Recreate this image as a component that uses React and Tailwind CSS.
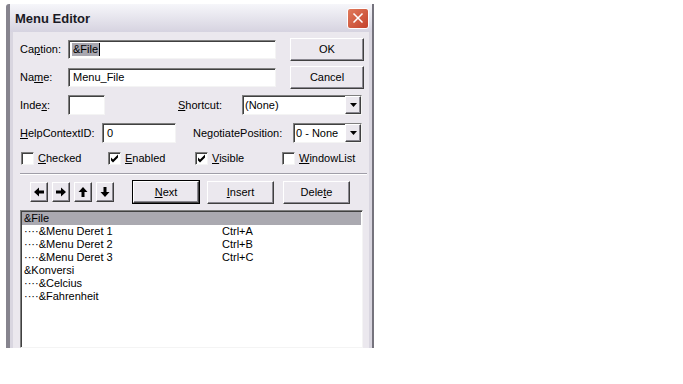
import { X } from "lucide-react";

const sunken =
  "bg-white border border-t-[#7f7f7f] border-l-[#7f7f7f] border-r-[#f4f4f4] border-b-[#f4f4f4] shadow-[inset_1px_1px_0_#404040]";
const raised =
  "bg-[#ebe8ee] border border-t-white border-l-white border-r-[#404040] border-b-[#404040] shadow-[inset_-1px_-1px_0_#8a8890] flex items-center justify-center";

function U({ children }) {
  return <span className="underline underline-offset-1">{children}</span>;
}

function Select({ value, className }) {
  return (
    <div className={`${sunken} flex items-stretch h-[20px] ${className}`}>
      <div className="flex-1 pl-[2px] flex items-center">{value}</div>
      <div className={`${raised} w-[16px]`}>
        <svg width="7" height="4" viewBox="0 0 7 4">
          <path d="M0 0h7L3.5 4z" fill="#000" />
        </svg>
      </div>
    </div>
  );
}

function Check({ checked, children, className }) {
  return (
    <div className={`flex items-center gap-[4px] ${className}`}>
      <div className={`${sunken} w-[13px] h-[13px] flex items-center justify-center`}>
        {checked && (
          <svg width="9" height="9" viewBox="0 0 9 9">
            <path d="M1 3.5l2 2L8 0.5v3L3 8.5 1 6.5z" fill="#000" />
          </svg>
        )}
      </div>
      <span>{children}</span>
    </div>
  );
}

function Arrow({ dir }) {
  const paths = {
    left: "M0 5L5 0.5v3h5v3H5v3z",
    right: "M10 5L5 0.5v3H0v3h5v3z",
    up: "M5 0L0.5 5h3v5h3V5h3z",
    down: "M5 10L0.5 5h3V0h3v5h3z",
  };
  return (
    <div className={`${raised} w-[18px] h-[20px]`}>
      <svg width="10" height="10" viewBox="0 0 10 10">
        <path d={paths[dir]} fill="#000" />
      </svg>
    </div>
  );
}

const items = [
  { t: "&File", k: "", sel: true },
  { t: "····&Menu Deret 1", k: "Ctrl+A" },
  { t: "····&Menu Deret 2", k: "Ctrl+B" },
  { t: "····&Menu Deret 3", k: "Ctrl+C" },
  { t: "&Konversi", k: "" },
  { t: "····&Celcius", k: "" },
  { t: "····&Fahrenheit", k: "" },
];

export default function App() {
  return (
    <div className="w-[683px] h-[384px] bg-white overflow-hidden font-['Liberation_Sans',Arial,sans-serif] text-[11px] leading-[13px] text-black">
      <div className="ml-[6px] mt-[4px] w-[368px] h-[344px] flex flex-col bg-[#d9d6e0] border-l-[4px] border-l-[#86848e] border-r-[2px] border-r-[#75737d] rounded-tl-[3px]">
        {/* title bar */}
        <div className="h-[28px] flex items-center justify-between pl-[5px] pr-[3px] bg-gradient-to-b from-[#f6f6fa] to-[#d6d3e0]">
          <span className="font-bold text-[13px] text-[#1a1a24]">Menu Editor</span>
          <div className="w-[22px] h-[21px] rounded-[3px] border border-white bg-gradient-to-br from-[#e07a5c] to-[#c4402a] flex items-center justify-center">
            <X size={16} color="#fff" strokeWidth={2.5} />
          </div>
        </div>

        {/* client */}
        <div className="flex-1 mx-[3px] bg-[#ebe8ee] flex flex-col pl-[7px] pr-[3px] pt-[6px]">
          <div className="h-[23px] flex items-center">
            <span className="w-[48px]">Ca<U>p</U>tion:</span>
            <div className={`${sunken} w-[208px] h-[19px] flex items-center pl-[3px]`}>
              <span className="bg-[#a9a8b0] px-[1px]">&amp;File</span>
              <span className="w-px h-[13px] bg-black" />
            </div>
            <div className={`${raised} ml-[14px] w-[74px] h-[23px]`}>OK</div>
          </div>

          <div className="mt-[5px] h-[23px] flex items-center">
            <span className="w-[48px]">Na<U>m</U>e:</span>
            <div className={`${sunken} w-[208px] h-[19px] flex items-center pl-[4px]`}>Menu_File</div>
            <div className={`${raised} ml-[14px] w-[74px] h-[23px]`}>Cancel</div>
          </div>

          <div className="mt-[6px] h-[20px] flex items-center">
            <span className="w-[48px]">
              Inde<U>x</U>:
            </span>
            <div className={`${sunken} w-[37px] h-[20px]`} />
            <span className="ml-[73px] w-[64px]">
              <U>S</U>hortcut:
            </span>
            <Select value="(None)" className="w-[120px]" />
          </div>

          <div className="mt-[8px] h-[20px] flex items-center">
            <span className="w-[82px]">
              <U>H</U>elpContextID:
            </span>
            <div className={`${sunken} w-[74px] h-[20px] flex items-center pl-[4px]`}>0</div>
            <span className="ml-[17px] w-[100px]">
              Ne<U>g</U>otiatePosition:
            </span>
            <Select value="0 - None" className="w-[69px]" />
          </div>

          <div className="mt-[9px] h-[13px] flex items-center">
            <Check className="ml-[1px] w-[87px]">
              <U>C</U>hecked
            </Check>
            <Check checked className="w-[87px]">
              <U>E</U>nabled
            </Check>
            <Check checked className="w-[87px]">
              <U>V</U>isible
            </Check>
            <Check>
              <U>W</U>indowList
            </Check>
          </div>

          <div className="mt-[8px] mr-[-1px] h-[2px] border-t border-t-[#a09ea8] border-b border-b-white" />

          <div className="mt-[5px] h-[24px] flex items-center">
            <div className="ml-[10px] flex gap-[4px]">
              <Arrow dir="left" />
              <Arrow dir="right" />
              <Arrow dir="up" />
              <Arrow dir="down" />
            </div>
            <div className="ml-[18px] w-[68px] h-[24px] border border-black flex">
              <div className={`${raised} flex-1`}>
                <U>N</U>ext
              </div>
            </div>
            <div className={`${raised} ml-[7px] w-[67px] h-[23px]`}>
              <U>I</U>nsert
            </div>
            <div className={`${raised} ml-[9px] w-[67px] h-[23px]`}>
              Dele<U>t</U>e
            </div>
          </div>

          <div className={`${sunken} mt-[6px] w-[343px] flex-1 pt-[1px] pl-px pr-[1px]`}>
            {items.map((it) => (
              <div
                key={it.t}
                className={`h-[13px] flex pl-[2px] ${it.sel ? "bg-[#aaa9b0]" : ""}`}
              >
                <span className="w-[198px] whitespace-pre">{it.t}</span>
                <span>{it.k}</span>
              </div>
            ))}
          </div>
        </div>
      </div>
    </div>
  );
}
